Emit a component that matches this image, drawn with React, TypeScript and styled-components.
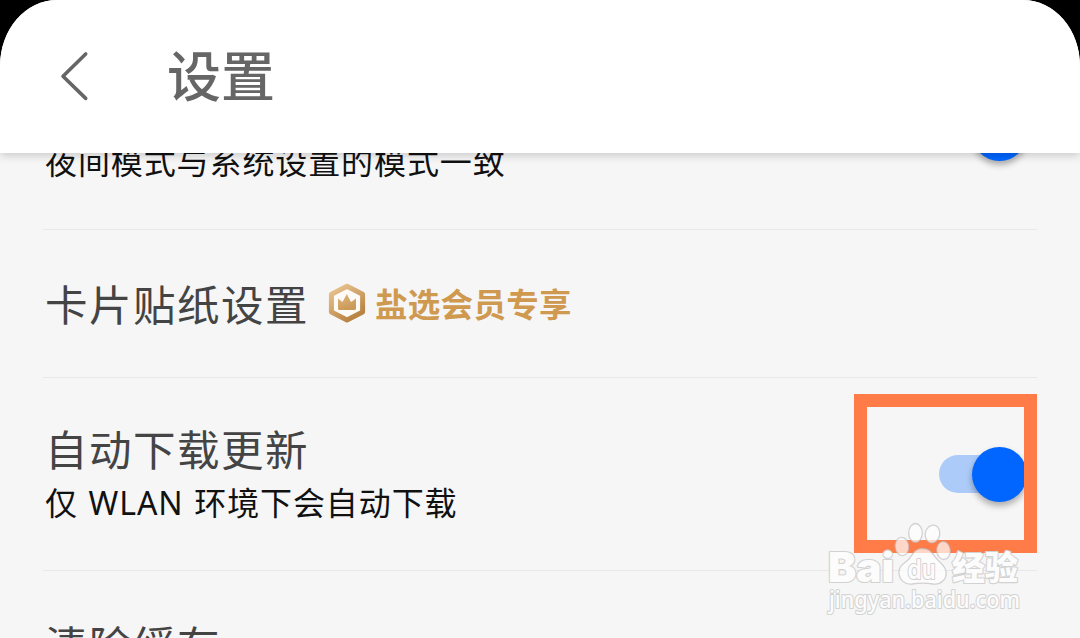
import styled, { createGlobalStyle } from "styled-components";

interface Setting {
  id: number;
  label?: string;
  hint?: string;
  vip?: string;
  toggle?: boolean;
}

const settings: Setting[] = [
  { id: 1, hint: "夜间模式与系统设置的模式一致", toggle: true },
  { id: 2, label: "卡片贴纸设置", vip: "盐选会员专享" },
  { id: 3, label: "自动下载更新", hint: "仅 WLAN 环境下会自动下载", toggle: true },
  { id: 4, label: "清除缓存" },
];

function BackIcon() {
  return (
    <svg width="32" height="54" viewBox="0 0 32 54" fill="none">
      <path
        d="M27.7 4 L5 26.2 L27.7 48.4"
        stroke="#666"
        strokeWidth="3.6"
        strokeLinecap="round"
        strokeLinejoin="round"
      />
    </svg>
  );
}

function VipIcon() {
  return (
    <svg width="38" height="40" viewBox="0 0 38 40">
      <defs>
        <linearGradient id="gold" x1="0" y1="0" x2="0.6" y2="1">
          <stop offset="0" stopColor="#ecc794" />
          <stop offset="1" stopColor="#b98443" />
        </linearGradient>
        <linearGradient id="crown" x1="0" y1="0" x2="0.4" y2="1">
          <stop offset="0" stopColor="#dfb67c" />
          <stop offset="1" stopColor="#cb9a59" />
        </linearGradient>
      </defs>
      <path
        d="M19 3.2 L34.6 11.3 V29 L19 37 L3.4 29 V11.3 Z"
        fill="#fdfbf8"
        stroke="url(#gold)"
        strokeWidth="5"
        strokeLinejoin="round"
      />
      <path
        d="M10 15.5 L14.5 19 L18.8 11 L23 19 L28 15.5 V25.5 Q28 27 26.5 27 H11.5 Q10 27 10 25.5 Z"
        fill="url(#crown)"
      />
    </svg>
  );
}

function Watermark() {
  return (
    <Mark width="210" height="110" viewBox="0 0 210 110">
      <g fill="#fff" fillOpacity="0.7" stroke="#b8b8b8" strokeOpacity="0.6" strokeWidth="1.3">
        <ellipse cx="82" cy="31.5" rx="6.8" ry="9.2" transform="rotate(-6 82 31.5)" />
        <ellipse cx="95.5" cy="18" rx="6.8" ry="9.5" />
        <ellipse cx="112.5" cy="19" rx="7.2" ry="9" transform="rotate(12 112.5 19)" />
        <ellipse cx="123.5" cy="35.5" rx="6.8" ry="9" transform="rotate(-6 123.5 35.5)" />
        <path d="M102 33.5 C94 33.5 92 41 88 45 C83 49 79 51 79 57 C79 65 85 70 92 69 C98 68 107 68 113 69 C121 70 127 64 126 57 C126 51 120 48 116 43 C112 38 110 33.5 102 33.5 Z" />
      </g>
      <MarkText x="8" y="67" fontSize="41" fontWeight="900" fontFamily="Inter, sans-serif" textLength="66" lengthAdjust="spacingAndGlyphs">
        Bai
      </MarkText>
      <MarkText x="87.5" y="64" fontSize="27" fontWeight="600" fontFamily="Inter, sans-serif" textLength="28" lengthAdjust="spacingAndGlyphs">
        du
      </MarkText>
      <MarkText x="132" y="65" fontSize="33" fontWeight="900">
        经验
      </MarkText>
      <MarkText x="9" y="93" fontSize="24" fontWeight="500" fontFamily="'Noto Sans', sans-serif" textLength="191" lengthAdjust="spacingAndGlyphs">
        jingyan.baidu.com
      </MarkText>
    </Mark>
  );
}

function App() {
  return (
    <>
      <GlobalStyle />
      <Screen>
        <Header>
          <BackIcon />
          <Title>设置</Title>
        </Header>
        <Content>
          <List>
            {settings.map((item) => (
              <Row key={item.id} $tall={!!item.hint}>
                <Texts>
                  <LabelLine>
                    {item.label && <Label>{item.label}</Label>}
                    {item.vip && (
                      <Vip>
                        <VipIcon />
                        {item.vip}
                      </Vip>
                    )}
                  </LabelLine>
                  {item.hint && <Hint>{item.hint}</Hint>}
                </Texts>
                {item.toggle && (
                  <Toggle>
                    <Knob />
                  </Toggle>
                )}
              </Row>
            ))}
          </List>
        </Content>
        <Highlight />
        <Watermark />
      </Screen>
    </>
  );
}

const GlobalStyle = createGlobalStyle`
  * {
    box-sizing: border-box;
  }
  body {
    margin: 0;
    background: #000;
    font-family: "Noto Sans CJK SC", "Noto Sans", sans-serif;
  }
`;

const Screen = styled.div`
  position: relative;
  display: flex;
  flex-direction: column;
  width: 1080px;
  height: 638px;
  overflow: hidden;
  border-radius: 57px 57px 0 0 / 66px 66px 0 0;
  background: #f6f6f6;
`;

const Header = styled.header`
  z-index: 1;
  flex: none;
  display: flex;
  align-items: center;
  gap: 77px;
  height: 153px;
  padding-left: 58px;
  background: #fff;
  box-shadow: 0 2px 9px rgba(0, 0, 0, 0.2);
`;

const Title = styled.h1`
  margin: 0;
  padding-bottom: 6px;
  font-size: 54px;
  font-weight: 500;
  line-height: 70px;
  color: #666;
`;

const Content = styled.main`
  flex: 1;
  min-height: 0;
`;

/* list is scrolled so that the first row sits half under the header */
const List = styled.div`
  margin: -116px 43px 0;
`;

const Row = styled.div<{ $tall: boolean }>`
  display: flex;
  align-items: center;
  justify-content: space-between;
  height: ${({ $tall }) => ($tall ? "193px" : "148px")};
  padding: 0 10px ${({ $tall }) => ($tall ? "0" : "2px")} 2px;
  border-bottom: 1px solid #e8e8e8;
`;

const Texts = styled.div`
  display: flex;
  flex-direction: column;
`;

const LabelLine = styled.div`
  display: flex;
  align-items: center;
  gap: 19px;
  height: 54px;
`;

const Label = styled.span`
  font-size: 42.5px;
  line-height: 54px;
  letter-spacing: 1.5px;
  color: #444;
`;

const Vip = styled.span`
  display: flex;
  align-items: center;
  gap: 9px;
  font-size: 32.5px;
  font-weight: 700;
  line-height: 40px;
  letter-spacing: 0.3px;
  color: #cf9a50;
`;

const Hint = styled.span`
  padding-top: 3px;
  font-family: "Noto Sans", "Noto Sans CJK SC", sans-serif;
  font-size: 32px;
  font-weight: 400;
  line-height: 50px;
  letter-spacing: 0.9px;
  word-spacing: 1.5px;
  color: #111;
`;

const Toggle = styled.div`
  display: flex;
  align-items: center;
  justify-content: flex-end;
  width: 88px;
  height: 38px;
  border-radius: 19px;
  background: linear-gradient(to right, #adcbf9 70px, transparent 70px);
`;

const Knob = styled.div`
  width: 55px;
  height: 55px;
  border-radius: 50%;
  background: #0066ff;
  box-shadow: 0 4px 6px rgba(0, 0, 0, 0.3);
`;

const Highlight = styled.div`
  position: absolute;
  top: 394px;
  left: 854px;
  width: 183px;
  height: 159px;
  border: 13px solid #ff7b47;
`;

const Mark = styled.svg`
  position: absolute;
  top: 515px;
  left: 820px;
`;

const MarkText = styled.text`
  fill: #fcfcfc;
  stroke: #d2d2d2;
  stroke-width: 2.2px;
  stroke-linejoin: round;
  paint-order: stroke;
`;

export default App;
